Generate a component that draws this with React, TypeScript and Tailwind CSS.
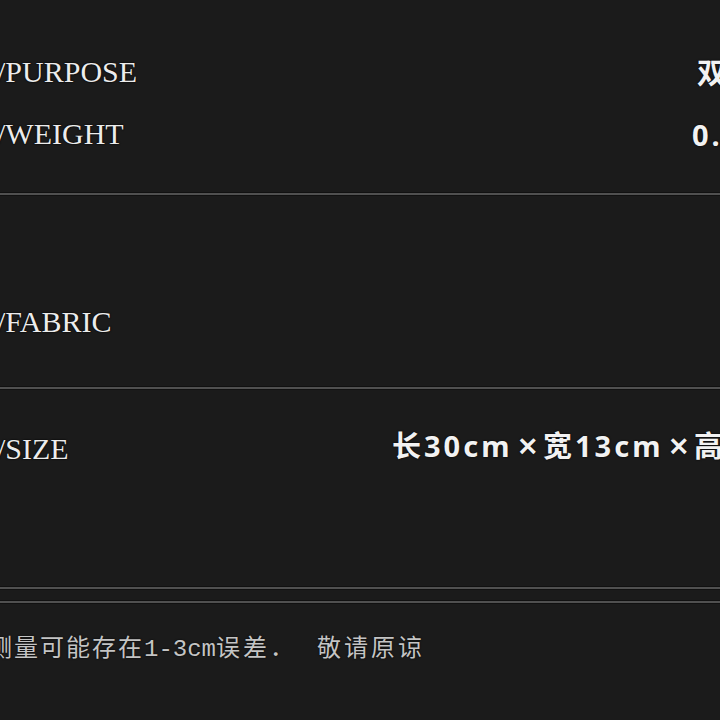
const labelCls =
  "w-[160px] shrink-0 -ml-[3px] text-[30px] leading-none text-[#ececec] [text-shadow:0_0_2px_#000,0_0_1px_#000] [font-family:'Liberation_Serif',serif]";
const valueCls =
  "text-[29px] leading-none font-bold tracking-[3px] text-[#f2f2f2] whitespace-nowrap [text-shadow:0_0_2px_#000] [font-family:'Noto_Sans','Noto_Sans_CJK_SC',sans-serif]";

function Divider() {
  return (
    <div className="h-[4px] bg-[#111] py-[1px]">
      <div className="h-[2px] bg-[#505050]" />
    </div>
  );
}

function Times() {
  return <span className="mx-[5px] text-[36px] font-semibold tracking-[0px] align-[-2px]">×</span>;
}

function Row({ label, children, offset }: { label: string; children?: React.ReactNode; offset?: string }) {
  return (
    <div className="h-[62px] flex items-center">
      <span className={labelCls}>{label}</span>
      {children && <span className={`${valueCls} ${offset}`}>{children}</span>}
    </div>
  );
}

export default function App() {
  return (
    <div className="w-[720px] h-[720px] overflow-hidden bg-[#1b1b1b] flex flex-col">
      {/* 用途 / 重量 */}
      <div className="h-[192px] pt-[41px] flex flex-col shrink-0">
        <Row label="/PURPOSE" offset="ml-[540px]">双肩包</Row>
        <Row label="/WEIGHT" offset="ml-[535px]">0.5kg</Row>
      </div>
      <Divider />
      {/* 面料 */}
      <div className="h-[190px] pt-[95px] flex flex-col shrink-0">
        <Row label="/FABRIC" />
      </div>
      <Divider />
      {/* 尺寸 */}
      <div className="h-[196px] pt-[28px] flex flex-col shrink-0">
        <Row label="/SIZE" offset="ml-[235px] -mt-[6px]">
          长30cm<Times />宽13cm<Times />高40cm
        </Row>
      </div>
      <Divider />
      <div className="h-[10px] shrink-0" />
      <Divider />
      {/* 备注 */}
      <div className="pt-[30px] -ml-[12px] whitespace-nowrap text-[24px] leading-none tracking-[2px] text-[#c4c4c4] [text-shadow:0_0_2px_#000] [font-family:'Noto_Sans_CJK_SC',sans-serif]">
        测量可能存在<span className="tracking-[0px] [font-family:'Liberation_Mono',monospace]">1-3cm</span>
        <span className="tracking-[3px]">误差．</span>
        <span className="ml-[20px] tracking-[3px]">敬请原谅</span>
      </div>
    </div>
  );
}
